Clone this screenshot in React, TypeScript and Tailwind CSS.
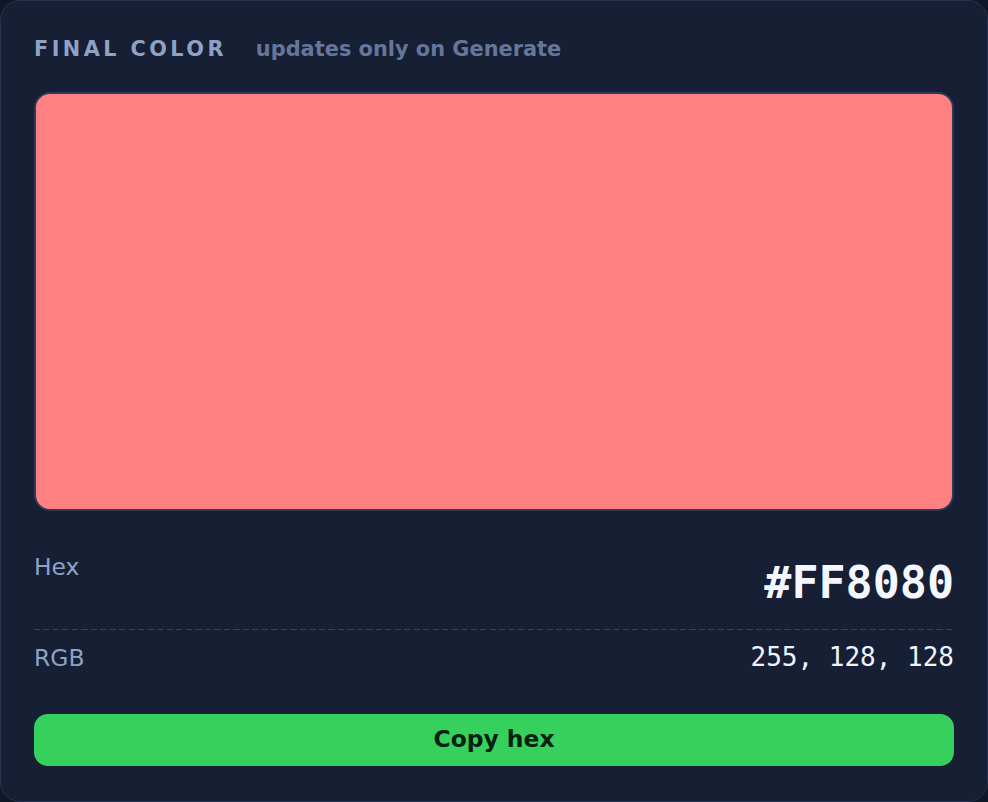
import React from 'react';

const hex = '#FF8080';
const rgb = '255, 128, 128';

export default function App() {
  return (
    <div className="w-[988px] h-[802px] bg-[#0f1826] font-['DejaVu_Sans',sans-serif]">
      <div className="h-full rounded-[20px] border border-[#26334f] bg-[#161f33] px-[33px] pt-[38px] flex flex-col">
        <div className="flex items-baseline gap-[29px] leading-none">
          <span className="text-[20.8px] font-bold tracking-[0.165em] text-[#8fa2c6]">FINAL COLOR</span>
          <span className="text-[20.9px] font-bold text-[#66769b]">updates only on Generate</span>
        </div>

        <div
          className="mt-[32px] h-[419px] rounded-[16px] border-2 border-[#2c3a58]"
          style={{ backgroundColor: hex }}
        />

        <div className="mt-[45px] flex justify-between items-start pb-[24px] leading-none">
          <span className="text-[23.4px] text-[#8ea2c6]">Hex</span>
          <span className="mt-[4px] text-[45px] font-bold text-[#f4f7ff] font-['DejaVu_Sans_Mono',monospace]">{hex}</span>
        </div>
        <div className="h-[1.5px] bg-[repeating-linear-gradient(90deg,#34425f_0px,#34425f_6px,transparent_6px,transparent_9.5px)]" />

        <div className="pt-[14px] flex justify-between items-baseline leading-none">
          <span className="text-[23.4px] text-[#8ea2c6]">RGB</span>
          <span className="text-[26px] text-[#eef3ff] font-['DejaVu_Sans_Mono',monospace]">{rgb}</span>
        </div>

        <button className="mt-[43px] h-[52px] w-full rounded-[14px] bg-[#36d15c] text-[23.4px] font-bold text-[#08200f]">
          Copy hex
        </button>
      </div>
    </div>
  );
}
